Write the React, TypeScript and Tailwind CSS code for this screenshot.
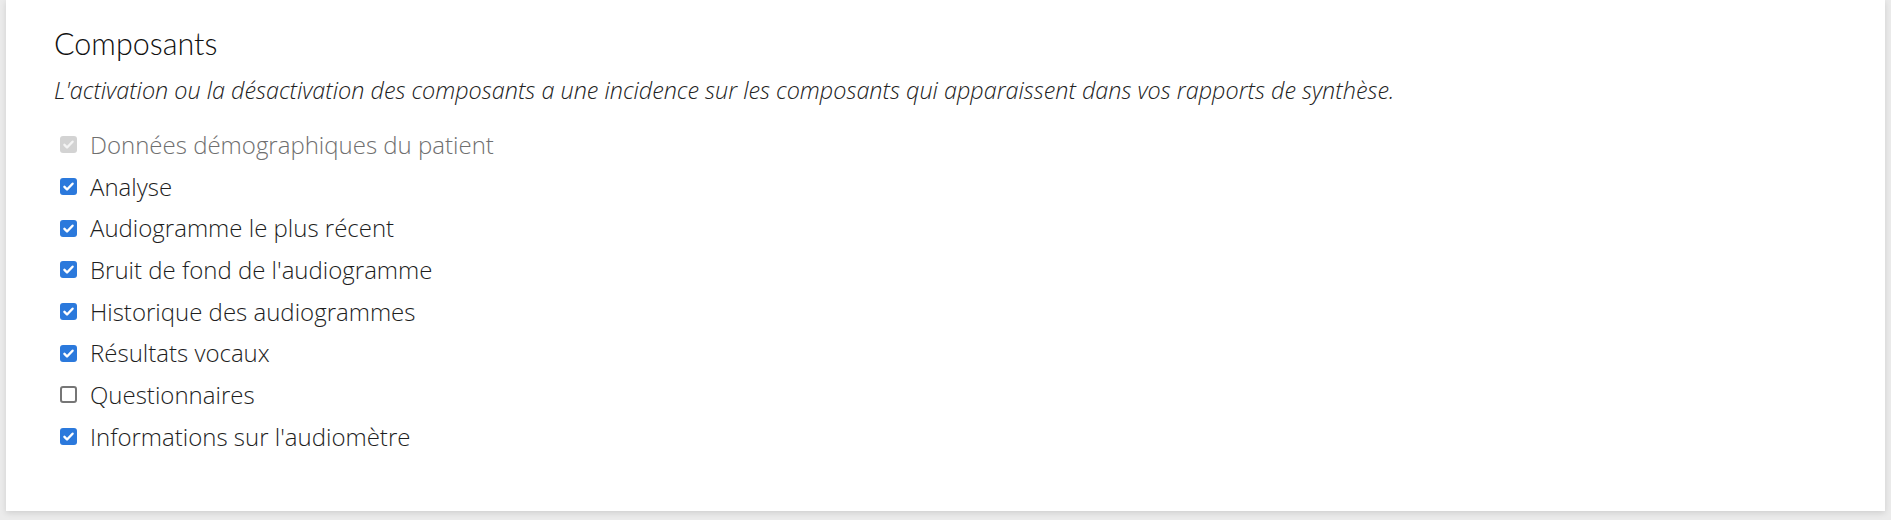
import React from 'react';

type Item = { label: string; checked: boolean; disabled?: boolean };

const items: Item[] = [
  { label: 'Données démographiques du patient', checked: true, disabled: true },
  { label: 'Analyse', checked: true },
  { label: 'Audiogramme le plus récent', checked: true },
  { label: "Bruit de fond de l'audiogramme", checked: true },
  { label: 'Historique des audiogrammes', checked: true },
  { label: 'Résultats vocaux', checked: true },
  { label: 'Questionnaires', checked: false },
  { label: "Informations sur l'audiomètre", checked: true },
];

const CheckMark: React.FC<{ color: string }> = ({ color }) => (
  <svg viewBox="0 0 16 16" className="w-[13px] h-[13px]" fill="none">
    <path d="M3 8.5l3.2 3.2L13 4.6" stroke={color} strokeWidth="3" strokeLinecap="round" strokeLinejoin="round" />
  </svg>
);

const Box: React.FC<{ item: Item }> = ({ item }) => {
  if (item.disabled) {
    return (
      <span className="w-[17px] h-[17px] shrink-0 rounded-[3px] bg-[#d3d3d3] flex items-center justify-center">
        <CheckMark color="#f4f4f4" />
      </span>
    );
  }
  if (item.checked) {
    return (
      <span className="w-[17px] h-[17px] shrink-0 rounded-[3px] bg-[#2b79dc] flex items-center justify-center">
        <CheckMark color="#ffffff" />
      </span>
    );
  }
  return <span className="w-[17px] h-[17px] shrink-0 rounded-[3px] border-2 border-[#767676] bg-white" />;
};

export default function App() {
  return (
    <div className="min-h-[520px] bg-[#ebebeb] px-[6px] font-['Open_Sans',sans-serif]">
      <div className="bg-white h-[511px] shadow-[0_2px_6px_rgba(0,0,0,0.12)] pl-[48px] pt-[24px]">
        <h2 className="font-['Lato',sans-serif] font-light text-[30.5px] leading-[38px] text-[#111]">Composants</h2>
        <p className="mt-[12px] italic font-light text-[23.4px] leading-[32px] text-[#222]">
          L'activation ou la désactivation des composants a une incidence sur les composants qui apparaissent dans vos rapports de synthèse.
        </p>
        <div className="mt-[18px] flex flex-col">
          {items.map((it) => (
            <label key={it.label} className="h-[41.7px] flex items-center gap-[13px] pl-[6px]">
              <Box item={it} />
              <span className={`text-[24px] font-light leading-none ${it.disabled ? 'text-[#6f6f6f]' : 'text-[#1e1e1e]'}`}>{it.label}</span>
            </label>
          ))}
        </div>
      </div>
    </div>
  );
}
